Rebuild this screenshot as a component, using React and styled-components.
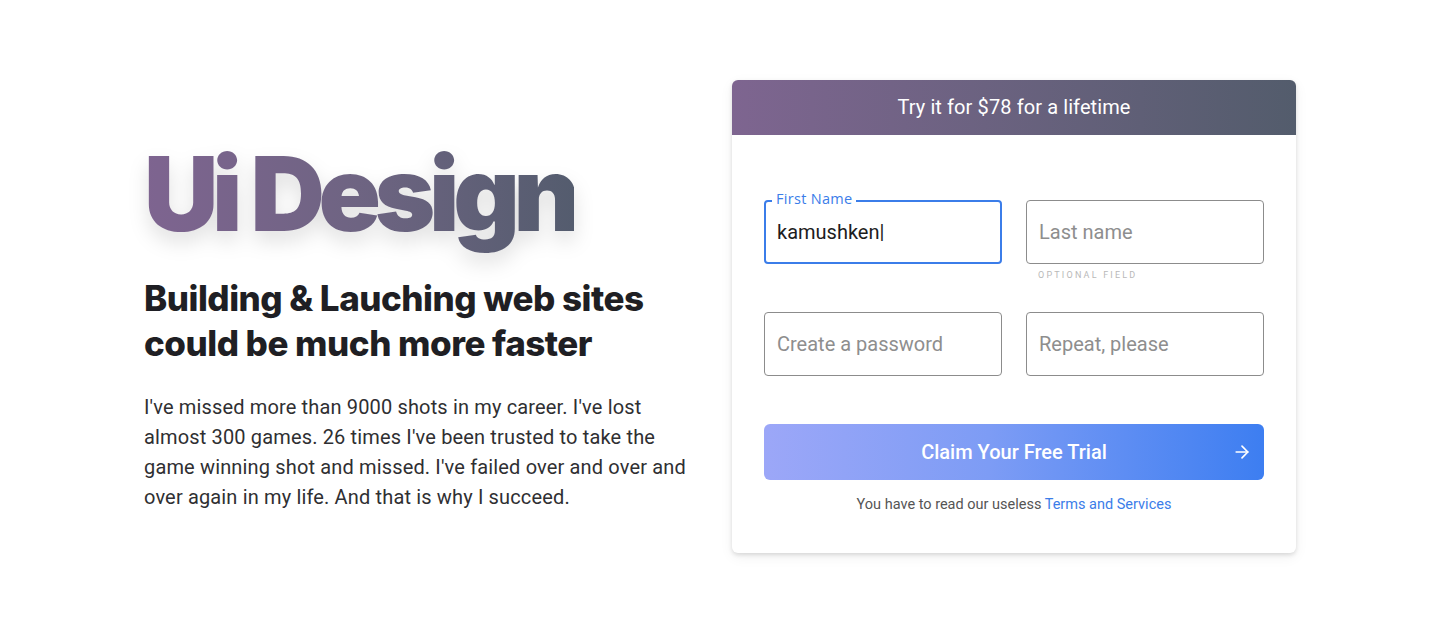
import React from "react";
import styled, { createGlobalStyle } from "styled-components";
import { ArrowRight } from "lucide-react";

const GlobalStyle = createGlobalStyle`
  body {
    margin: 0;
    background: #ffffff;
    font-family: Roboto, "Liberation Sans", sans-serif;
  }
  * { box-sizing: border-box; }
`;

const App = () => {
  return (
    <Page>
      <GlobalStyle />
      <Container>
        <Intro>
          <Title>Ui Design</Title>
          <Subtitle>
            Building &amp; Lauching web sites
            <br />
            could be much more faster
          </Subtitle>
          <Text>
            I've missed more than 9000 shots in my career. I've lost almost 300
            games. 26 times I've been trusted to take the game winning shot and
            missed. I've failed over and over and over again in my life. And
            that is why I succeed.
          </Text>
        </Intro>
        <Card>
          <CardHeader>Try it for $78 for a lifetime</CardHeader>
          <Form>
            <Grid>
              <Field>
                <Input active defaultValue="kamushken|" readOnly />
                <Label>First Name</Label>
              </Field>
              <Field>
                <Input placeholder="Last name" />
                <Hint>Optional field</Hint>
              </Field>
              <Field>
                <Input placeholder="Create a password" />
              </Field>
              <Field>
                <Input placeholder="Repeat, please" />
              </Field>
            </Grid>
            <Button>
              Claim Your Free Trial
              <ButtonIcon>
                <ArrowRight size={20} strokeWidth={2} />
              </ButtonIcon>
            </Button>
            <Terms>
              You have to read our useless <a href="#">Terms and Services</a>
            </Terms>
          </Form>
        </Card>
      </Container>
    </Page>
  );
};
export default App;

const Page = styled.div`
  min-height: 632px;
  display: flex;
  align-items: center;
  justify-content: center;
`;
const Container = styled.div`
  width: 1152px;
  display: grid;
  grid-template-columns: 1fr 564px;
  align-items: center;
`;
const Intro = styled.div`
  padding-top: 14px;
`;
const Title = styled.h1`
  margin: 0 0 22px 0;
  font-family: Inter, "Liberation Sans", sans-serif;
  font-weight: 900;
  font-size: 103px;
  line-height: 120px;
  letter-spacing: -6.3px;
  display: inline-block;
  background: linear-gradient(90deg, #7e6490 0%, #6e6482 50%, #545c6e 100%);
  -webkit-background-clip: text;
  background-clip: text;
  -webkit-text-fill-color: transparent;
  filter: drop-shadow(0 10px 10px rgba(0, 0, 0, 0.12));
`;
const Subtitle = styled.h2`
  margin: 0 0 26px 0;
  font-family: Inter, "Liberation Sans", sans-serif;
  font-weight: 800;
  font-size: 35px;
  line-height: 45px;
  letter-spacing: -0.5px;
  color: #1f1f24;
`;
const Text = styled.p`
  margin: 0;
  max-width: 552px;
  font-size: 20px;
  line-height: 30px;
  letter-spacing: 0.15px;
  color: #2f2f32;
`;
const Card = styled.div`
  background: #fff;
  border-radius: 6px;
  box-shadow: 0 2px 4px rgba(0, 0, 0, 0.12), 0 4px 14px rgba(0, 0, 0, 0.06);
  overflow: hidden;
`;
const CardHeader = styled.div`
  height: 55px;
  display: flex;
  align-items: center;
  justify-content: center;
  background: linear-gradient(90deg, #7e6590 0%, #6b6280 45%, #535c6c 100%);
  color: #fff;
  font-size: 20px;
  letter-spacing: 0.1px;
`;
const Form = styled.div`
  padding: 65px 32px 40px;
`;
const Grid = styled.div`
  display: grid;
  grid-template-columns: 1fr 1fr;
  column-gap: 24px;
  row-gap: 48px;
`;
const Field = styled.div`
  position: relative;
`;
const Input = styled.input`
  width: 100%;
  height: 64px;
  padding: 0 ${(p) => (p.active ? "11px" : "12px")};
  border: ${(p) => (p.active ? "2px solid #3b7de9" : "1px solid #8c8c8c")};
  border-radius: 4px;
  font-family: Roboto, "Liberation Sans", sans-serif;
  font-size: 20px;
  color: #1d1d1d;
  outline: none;
  &::placeholder {
    color: #8e8e8e;
  }
`;
const Label = styled.span`
  position: absolute;
  left: 8px;
  top: -10px;
  padding: 0 4px;
  background: #fff;
  font-family: "Open Sans", "Liberation Sans", sans-serif;
  font-size: 14.5px;
  line-height: 18px;
  letter-spacing: 0.3px;
  color: #3b7de9;
`;
const Hint = styled.div`
  position: absolute;
  left: 12px;
  top: 70px;
  font-size: 9px;
  letter-spacing: 2.2px;
  text-transform: uppercase;
  color: #b9b9b9;
`;
const Button = styled.button`
  position: relative;
  width: 100%;
  height: 56px;
  margin-top: 48px;
  border: none;
  border-radius: 6px;
  background: linear-gradient(90deg, #9ca7f8 0%, #7d9cf5 45%, #3d7ef1 100%);
  color: #fff;
  font-family: Roboto, "Liberation Sans", sans-serif;
  font-size: 20px;
  font-weight: 500;
  cursor: pointer;
`;
const ButtonIcon = styled.span`
  position: absolute;
  right: 12px;
  top: 18px;
  display: flex;
`;
const Terms = styled.p`
  margin: 17px 0 0;
  text-align: center;
  font-size: 14.5px;
  line-height: 16px;
  color: #555;
  a {
    color: #3b7de9;
    text-decoration: none;
  }
`;
